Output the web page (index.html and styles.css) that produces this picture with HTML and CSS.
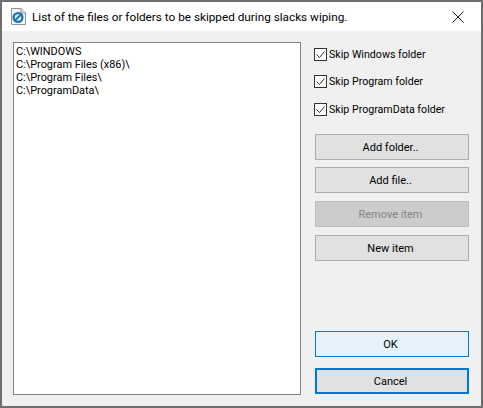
FILE: index.html
```html
<!DOCTYPE html>
<html lang="en">
<head>
<meta charset="utf-8">
<title>Skip list</title>
<link rel="stylesheet" href="styles.css">
</head>
<body>
<div class="window">
  <header class="titlebar">
    <svg class="app-icon" width="15" height="17" viewBox="0 0 15 17">
      <path d="M.5.5H10L14.500 5v11.500H.5z" fill="#f4f4f4" stroke="#8f9499"/>
      <path d="M10 .5V5h4.500" fill="#dcdcdc" stroke="#8f9499"/>
      <circle cx="7" cy="9.500" r="5.500" fill="#1574b8"/>
      <circle cx="7" cy="9.500" r="3.200" fill="#e8f2fa"/>
      <path d="M4.500 12 9.500 7" stroke="#1574b8" stroke-width="2"/>
    </svg>
    <span class="title">List of the files or folders to be skipped during slacks wiping.</span>
    <svg class="close" width="12" height="12" viewBox="0 0 12 12">
      <path d="M.5.5l11 11M11.500.5l-11 11" stroke="#1a1a1a" stroke-width="1" fill="none"/>
    </svg>
  </header>
  <main class="content">
    <div class="listbox">
      <div>C:\WINDOWS</div>
      <div>C:\Program Files (x86)\</div>
      <div>C:\Program Files\</div>
      <div>C:\ProgramData\</div>
    </div>
    <aside class="side">
      <div class="checks">
        <label class="check"><svg class="box" width="13" height="13" viewBox="0 0 13 13"><rect x=".5" y=".5" width="12" height="12" fill="#fff" stroke="#333"/><path d="M2.500 6.500l3 3 5-6" fill="none" stroke="#333"/></svg>Skip Windows folder</label>
        <label class="check"><svg class="box" width="13" height="13" viewBox="0 0 13 13"><rect x=".5" y=".5" width="12" height="12" fill="#fff" stroke="#333"/><path d="M2.500 6.500l3 3 5-6" fill="none" stroke="#333"/></svg>Skip Program folder</label>
        <label class="check third"><svg class="box" width="13" height="13" viewBox="0 0 13 13"><rect x=".5" y=".5" width="12" height="12" fill="#fff" stroke="#333"/><path d="M2.500 6.500l3 3 5-6" fill="none" stroke="#333"/></svg>Skip ProgramData folder</label>
      </div>
      <div class="actions">
        <div class="btn">Add folder..</div>
        <div class="btn second">Add file..</div>
        <div class="btn disabled">Remove item</div>
        <div class="btn">New item</div>
      </div>
      <div class="confirm">
        <div class="btn ok">OK</div>
        <div class="btn cancel">Cancel</div>
      </div>
    </aside>
  </main>
</div>
</body>
</html>
```
FILE: styles.css
```css
* { box-sizing: border-box; }
html, body { margin: 0; padding: 0; }
body { width: 483px; height: 408px; font-family: Roboto, sans-serif; font-size: 11px; color: #000; overflow: hidden; }
.window { width: 483px; height: 408px; border: 2px solid #6e6e6e; background: #f0f0f0; display: flex; flex-direction: column; }
.titlebar { height: 29px; flex: none; background: #fff; display: flex; align-items: center; padding: 0 17px 0 9px; }
.app-icon { flex: none; margin-right: 6px; }
.title { flex: 1; font-size: 11.75px; white-space: nowrap; color: #000; }
.close { flex: none; }
.content { flex: 1; display: flex; padding: 11px 12px 11px 11px; gap: 14px; min-height: 0; }
.listbox { width: 288px; background: #fff; border: 1px solid #82828c; padding: 2px 2px; line-height: 13px; font-size: 10.9px; }
.side { width: 154px; display: flex; flex-direction: column; }
.checks { display: flex; flex-direction: column; gap: 14px; padding-top: 6px; margin-left: -1px; height: 92px; font-size: 10.65px; }
.check { display: flex; align-items: center; height: 13px; white-space: nowrap; }
.third { margin-top: 1px; }
.box { flex: none; margin-right: 2px; }
.actions { display: flex; flex-direction: column; gap: 8px; }
.btn { height: 26px; display: flex; align-items: center; justify-content: center; padding-right: 3px; background: #e1e1e1; border: 1px solid #adadad; }
.second { margin-top: -1px; }
.disabled { background: #cccccc; color: #838383; border-color: #bfbfbf; }
.confirm { margin-top: auto; margin-bottom: 1px; display: flex; flex-direction: column; gap: 11px; }
.ok { background: #e5f1fb; border-color: #0078d7; }
.cancel { border: 2px solid #0078d7; }
```
